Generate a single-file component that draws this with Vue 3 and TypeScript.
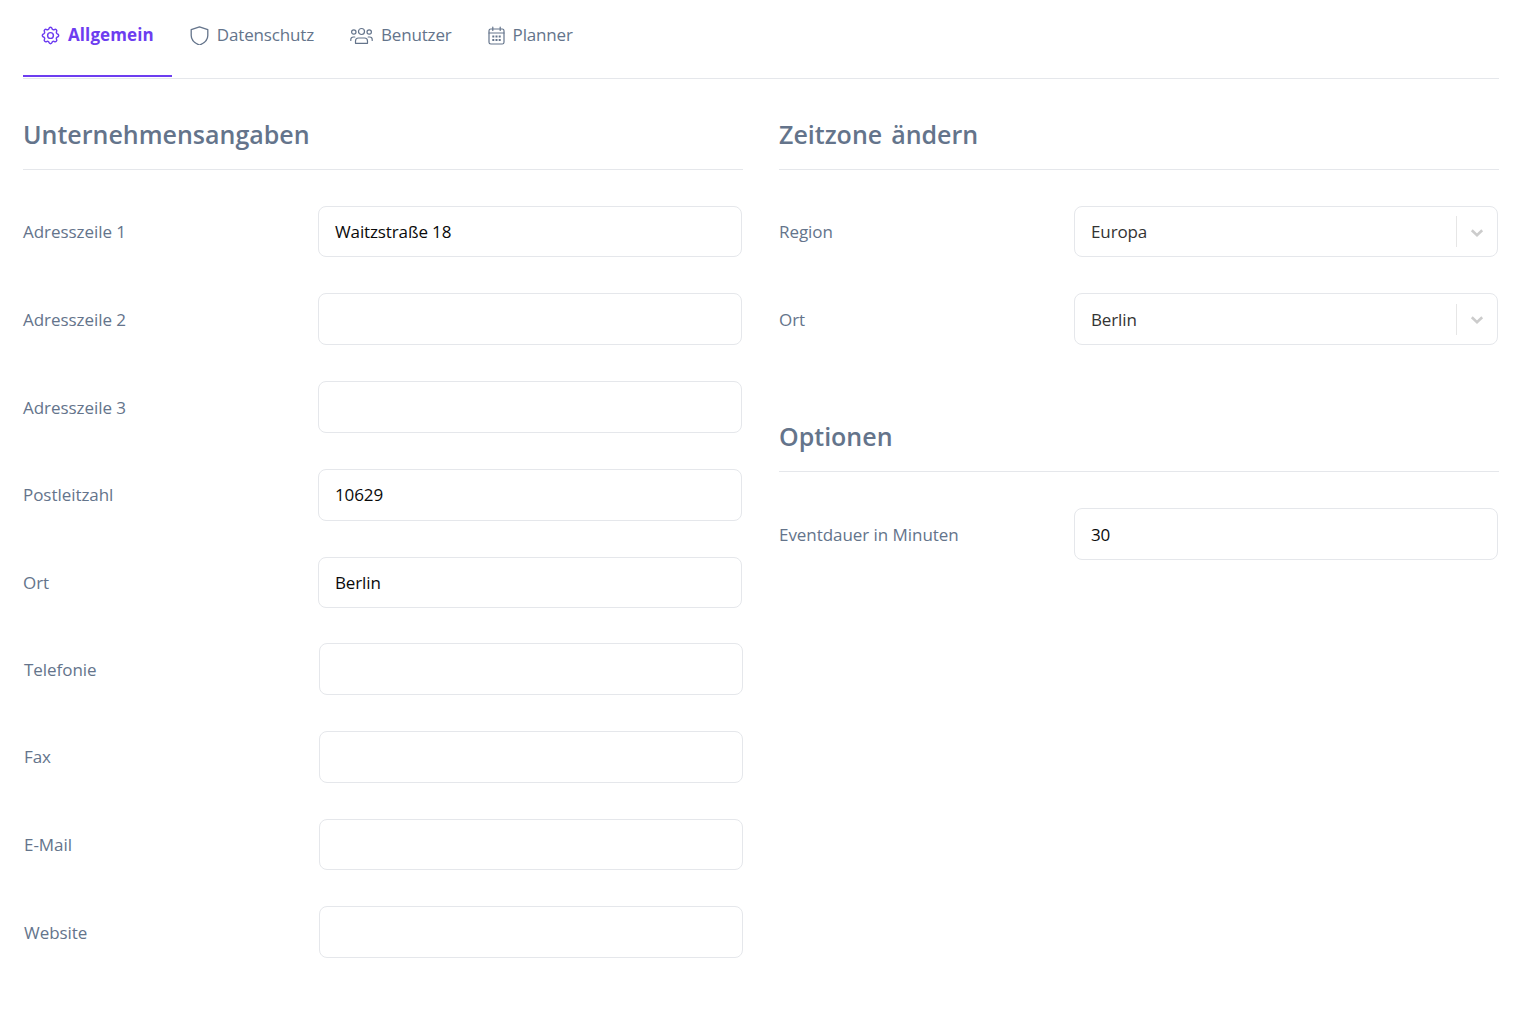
<script setup lang="ts">
const tabs = [
  { key: 'gear', label: 'Allgemein', active: true },
  { key: 'shield', label: 'Datenschutz', active: false },
  { key: 'users', label: 'Benutzer', active: false },
  { key: 'cal', label: 'Planner', active: false },
]
const groupA = [
  { label: 'Adresszeile 1', value: 'Waitzstraße 18' },
  { label: 'Adresszeile 2', value: '' },
  { label: 'Adresszeile 3', value: '' },
  { label: 'Postleitzahl', value: '10629' },
  { label: 'Ort', value: 'Berlin' },
]
const groupB = ['Telefonie', 'Fax', 'E-Mail', 'Website']
const selects = [
  { label: 'Region', value: 'Europa' },
  { label: 'Ort', value: 'Berlin' },
]
</script>

<template>
  <div class="page">
    <nav class="tabs">
      <a v-for="t in tabs" :key="t.key" class="tab" :class="{ active: t.active }">
        <svg v-if="t.key === 'gear'" class="ico gear" viewBox="1.5 1.5 21 21" fill="none" stroke="currentColor" stroke-width="1.6" stroke-linecap="round" stroke-linejoin="round">
          <path d="M10.3 4.3c.4-1.8 3-1.8 3.4 0a1.7 1.7 0 0 0 2.6 1.1c1.5-.9 3.3.8 2.4 2.4a1.7 1.7 0 0 0 1 2.5c1.8.4 1.8 3 0 3.4a1.7 1.7 0 0 0-1 2.6c.9 1.5-.9 3.3-2.4 2.4a1.7 1.7 0 0 0-2.6 1c-.4 1.8-3 1.8-3.4 0a1.7 1.7 0 0 0-2.6-1c-1.5.9-3.3-.9-2.4-2.4a1.7 1.7 0 0 0-1-2.6c-1.8-.4-1.8-3 0-3.4a1.700 1.700 0 0 0 1-2.500c-.9-1.600.9-3.300 2.400-2.400a1.700 1.700 0 0 0 2.600-1.100z" />
          <circle cx="12" cy="12" r="3.200" />
        </svg>
        <svg v-else-if="t.key === 'shield'" class="ico shield" viewBox="2.500 2 19 19" fill="none" stroke="currentColor" stroke-width="1.300" stroke-linejoin="round">
          <path d="M12 2.800l8.300 2.800v6c0 4.800-3.500 7.700-8.300 9.400-4.800-1.700-8.300-4.600-8.300-9.400v-6z" />
        </svg>
        <svg v-else-if="t.key === 'users'" class="ico users" viewBox="0 0 23 19" fill="none" stroke="currentColor" stroke-width="1.200" stroke-linecap="round" stroke-linejoin="round">
          <circle cx="11.500" cy="5.500" r="3" />
          <circle cx="3.800" cy="6" r="2.200" />
          <circle cx="19.200" cy="6" r="2.200" />
          <path d="M5.500 17.300v-2.300a3 3 0 0 1 3-3h6a3 3 0 0 1 3 3v2.300z" />
          <path d="M.8 14.500v-1a2.500 2.500 0 0 1 2.500-2.500h1.500M22.200 14.500v-1a2.500 2.500 0 0 0-2.500-2.500h-1.500" />
        </svg>
        <svg v-else class="ico cal" viewBox="0 0 17 19" fill="none" stroke="currentColor" stroke-width="1.200" stroke-linecap="round" stroke-linejoin="round">
          <rect x="1" y="3" width="15" height="15" rx="1.800" />
          <path d="M4.800 1v3.500M12.200 1v3.500M1 7h15" />
          <path d="M4.300 10.500h8.400M4.300 14h8.400" stroke-width="2" stroke-dasharray="2 1.200" stroke-linecap="butt" />
        </svg>
        <span>{{ t.label }}</span>
      </a>
    </nav>

    <div class="cols">
      <section class="col">
        <h2 class="title">Unternehmensangaben</h2>
        <div class="rows">
          <div v-for="r in groupA" :key="r.label" class="row">
            <label class="lbl">{{ r.label }}</label>
            <div class="field">{{ r.value }}</div>
          </div>
        </div>
        <div class="rows shifted">
          <div v-for="r in groupB" :key="r" class="row">
            <label class="lbl">{{ r }}</label>
            <div class="field"></div>
          </div>
        </div>
      </section>

      <section class="col">
        <h2 class="title">Zeitzone ändern</h2>
        <div class="rows">
          <div v-for="s in selects" :key="s.label" class="row">
            <label class="lbl">{{ s.label }}</label>
            <div class="field select">
              <span class="sel-val">{{ s.value }}</span>
              <span class="sep"></span>
              <svg class="chev" viewBox="0 0 20 20"><path d="M4.800 8.200 10 13.200 15.200 8.200" fill="none" stroke="#cccccc" stroke-width="2.600" /></svg>
            </div>
          </div>
        </div>
        <h2 class="title second">Optionen</h2>
        <div class="rows">
          <div class="row">
            <label class="lbl">Eventdauer in Minuten</label>
            <div class="field">30</div>
          </div>
        </div>
      </section>
    </div>
  </div>
</template>

<style scoped>
.page {
  padding: 0 31px 0 23px;
  font-family: "Open Sans", "Noto Sans", sans-serif;
  color: #64748b;
}
.tabs {
  display: flex;
  height: 78px;
  border-bottom: 1px solid #e5e7eb;
  box-sizing: content-box;
}
.tab {
  display: flex;
  align-items: center;
  gap: 8px;
  box-sizing: border-box;
  height: 77px;
  padding: 0 18px 7px;
  border-bottom: 2px solid transparent;
  font-size: 17px;
  color: #64748b;
  letter-spacing: -0.16px;
}
.tab.active {
  color: #6d3df0;
  font-weight: 700;
  letter-spacing: 0.1px;
  border-bottom-color: #6d3df0;
}
.ico { flex: none; height: 19px; margin-top: 2px; }
.gear, .shield { width: 19px; }
.users { width: 23px; }
.cal { width: 17px; }
.cols {
  display: grid;
  grid-template-columns: 720px 720px;
  column-gap: 36px;
}
.title {
  margin: 0 0 36px;
  padding: 36px 0 0;
  height: 90.6px;
  box-sizing: border-box;
  border-bottom: 1px solid #e5e7eb;
  font-size: 25px;
  line-height: 38px;
  font-weight: 600;
  word-spacing: 2.5px;
  color: #64748b;
}
.title.second { margin-top: 36.4px; }
.rows { display: flex; flex-direction: column; gap: 36px; }
.rows.shifted { margin-top: 34.85px; padding-left: 1px; }
.row {
  display: grid;
  grid-template-columns: 295px 424px;
  align-items: center;
  height: 51.75px;
}
.lbl { font-size: 17px; letter-spacing: -0.05px; padding-top: 0.4px; }
.shifted .lbl { padding-top: 0; }
.field {
  box-sizing: border-box;
  height: 51.75px;
  border: 1px solid #e5e7eb;
  border-radius: 8px;
  padding: 0.4px 16px 0;
  display: flex;
  align-items: center;
  font-size: 17px;
  letter-spacing: -0.12px;
  color: #0a0a0a;
  background: #fff;
}
.select { padding-right: 0; color: #333333; }
.sel-val { flex: 1; }
.sep { width: 1px; height: 31px; background: #e6e6e6; }
.chev { width: 20px; height: 20px; margin: 0 10px; }
</style>

<style>
body { margin: 0; background: #fff; }
</style>
